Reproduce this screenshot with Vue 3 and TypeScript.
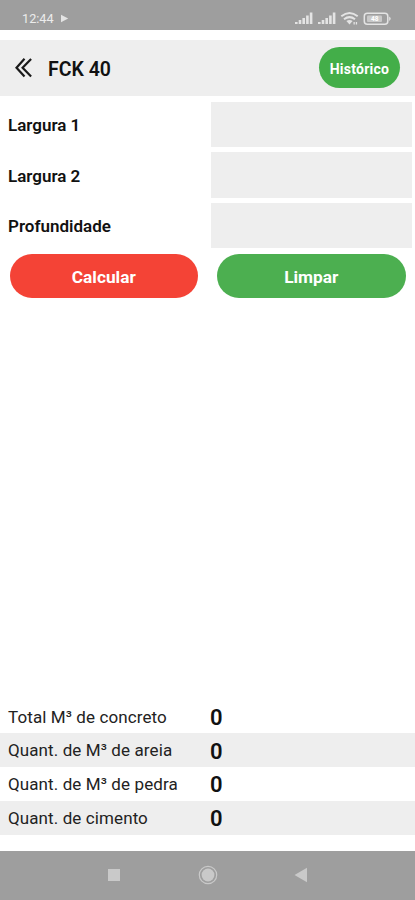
<script setup lang="ts">
import { ref } from 'vue'

interface Field {
  id: string
  label: string
}

interface Result {
  id: string
  label: string
  value: number
}

const fields: Field[] = [
  { id: 'largura1', label: 'Largura 1' },
  { id: 'largura2', label: 'Largura 2' },
  { id: 'profundidade', label: 'Profundidade' },
]

const values = ref<Record<string, string>>({ largura1: '', largura2: '', profundidade: '' })

const results: Result[] = [
  { id: 'total', label: 'Total M³ de concreto', value: 0 },
  { id: 'areia', label: 'Quant. de M³ de areia', value: 0 },
  { id: 'pedra', label: 'Quant. de M³ de pedra', value: 0 },
  { id: 'cimento', label: 'Quant. de cimento', value: 0 },
]

function clear() {
  values.value = { largura1: '', largura2: '', profundidade: '' }
}
</script>

<template>
  <div class="screen">
    <div class="status">
      <span class="clock">12:44</span>
      <svg class="play" width="9" height="9" viewBox="0 0 9 9"><path d="M1 .8 8.2 4.5 1 8.2Z" /></svg>
      <svg class="indicators" width="98" height="16" viewBox="0 0 98 16">
        <g fill="#e4e4e4">
          <path d="M1 12h2.6v2H1zM4.700 10h2.600v4H4.700zM8.400 8H11v6H8.400zM12.100 5.500h2.600V14h-2.600zM15.800 2.500h2.600V14h-2.600z" />
          <path d="M24 12h2.600v2H24zM27.700 10h2.600v4h-2.600zM31.400 8H34v6h-2.600zM35.100 5.500h2.600V14h-2.600zM38.800 2.500h2.600V14h-2.600z" />
          <path d="M52.400 11 55.500 14.600 58.600 11Q55.500 8.800 52.400 11Z" />
          <path d="M59.500 12h1.300v2.500h-1.300zM61.800 12h1.300v2.500h-1.300z" />
        </g>
        <g fill="none" stroke="#e4e4e4" stroke-width="2">
          <path d="M47.300 6.300Q55.500-.3 63.700 6.300M50 9.300Q55.500 4.900 61 9.300" />
          <rect x="70.300" y="3.200" width="23.500" height="11" rx="3" stroke-width="1.500" />
        </g>
        <rect x="73" y="5.600" width="15" height="6.300" rx="1" fill="#c9c9c9" />
        <path d="M95.200 6.500q3 2.200 0 4.400z" fill="#e4e4e4" />
        <text x="77" y="11.200" class="battery">48</text>
      </svg>
    </div>

    <header class="header">
      <svg class="back" width="18" height="20" viewBox="0 0 18 20">
        <path d="M9.500 .8 1.500 9.700 9.500 18.600M16.100 1 7.600 9.700 16.100 18.400" />
      </svg>
      <h1 class="title">FCK 40</h1>
      <button class="history" type="button">Histórico</button>
    </header>

    <main class="main">
      <div class="fields">
        <label v-for="field in fields" :key="field.id" class="field">
          <span class="field-label">{{ field.label }}</span>
          <input v-model="values[field.id]" class="field-input" inputmode="decimal" />
        </label>
      </div>
      <div class="actions">
        <button class="action calculate" type="button">Calcular</button>
        <button class="action clear" type="button" @click="clear">Limpar</button>
      </div>
    </main>

    <div class="results">
      <div v-for="row in results" :key="row.id" class="result">
        <span class="result-label">{{ row.label }}</span>
        <span class="result-value">{{ row.value }}</span>
      </div>
    </div>

    <nav class="nav">
      <svg width="14" height="14" viewBox="0 0 14 14"><path d="M1 1h12v12H1z" /></svg>
      <svg width="20" height="20" viewBox="0 0 20 20">
        <circle cx="10" cy="10" r="6.400" />
        <circle cx="10" cy="10" r="8.700" class="ring" />
      </svg>
      <svg width="14" height="16" viewBox="0 0 14 16"><path d="M.5 8 13 .8v14.400z" /></svg>
    </nav>
  </div>
</template>

<style>
body {
  background: #fff;
}
</style>

<style scoped>
.screen {
  display: flex;
  flex-direction: column;
  width: 100%;
  height: 900px;
  overflow: hidden;
  background: #fff;
  color: #111;
  font-family: Roboto, "Liberation Sans", sans-serif;
}

button {
  padding: 0;
  border: 0;
  color: #fff;
  font-family: inherit;
  font-weight: 700;
}

.status {
  display: flex;
  flex: none;
  box-sizing: border-box;
  height: 29.5px;
  padding: 9px 23px 0 22px;
  background: #9e9e9e;
}

.clock {
  color: #ececec;
  font-size: 12.7px;
  font-weight: 400;
  line-height: 20px;
}

.play {
  margin: 5px 0 0 6px;
  fill: #e4e4e4;
}

.indicators {
  margin: 1px 0 0 auto;
}

.battery {
  fill: #fff;
  font-size: 6.5px;
  font-weight: 700;
}

.header {
  display: flex;
  flex: none;
  align-items: center;
  box-sizing: border-box;
  height: 56px;
  margin-top: 10.5px;
  padding: 0 15px 0 15px;
  background: #eee;
}

.back {
  fill: none;
  stroke: #1a1a1a;
  stroke-width: 2.2;
}

.title {
  margin: 2px 0 0 15px;
  font-size: 19.5px;
  font-weight: 600;
}

.history {
  width: 81px;
  height: 41px;
  margin: 0 0 1px auto;
  padding-top: 2px;
  border-radius: 21px;
  background: #43ae49;
  font-size: 14px;
  letter-spacing: 0.25px;
}

.main {
  flex: 1;
  padding-top: 5.5px;
}

.fields {
  display: grid;
  gap: 5px;
}

.field {
  display: grid;
  grid-template-columns: 203px 201px;
  align-items: center;
  padding-left: 8px;
}

.field-label {
  padding-top: 2px;
  font-size: 17px;
  font-weight: 600;
}

.field-input {
  box-sizing: border-box;
  width: 100%;
  height: 45.5px;
  padding: 0 10px;
  border: 0;
  background: #eee;
  font: inherit;
}

.actions {
  display: grid;
  grid-template-columns: 188.5px 188.5px;
  gap: 19px;
  padding: 5.5px 9.5px 0;
}

.action {
  height: 44.5px;
  padding-top: 2px;
  border-radius: 23px;
  font-size: 17.3px;
}

.calculate {
  background: #f44336;
}

.clear {
  background: #4caf50;
}

.results {
  flex: none;
  margin-bottom: 16.5px;
}

.result {
  display: grid;
  grid-template-columns: 202px 1fr;
  align-items: center;
  height: 33.7px;
  padding-left: 8px;
}

.result:nth-child(even) {
  background: #eee;
}

.result-label {
  color: #222;
  font-size: 17px;
  letter-spacing: 0.1px;
}

.result-value {
  padding-top: 2px;
  font-size: 22px;
  font-weight: 600;
}

.nav {
  display: flex;
  flex: none;
  align-items: center;
  justify-content: space-between;
  box-sizing: border-box;
  height: 49px;
  padding: 0 107px 1px 107px;
  background: #9e9e9e;
  fill: #c9c9c9;
}

.ring {
  fill: none;
  stroke: #c9c9c9;
  stroke-width: 1.2;
}
</style>
